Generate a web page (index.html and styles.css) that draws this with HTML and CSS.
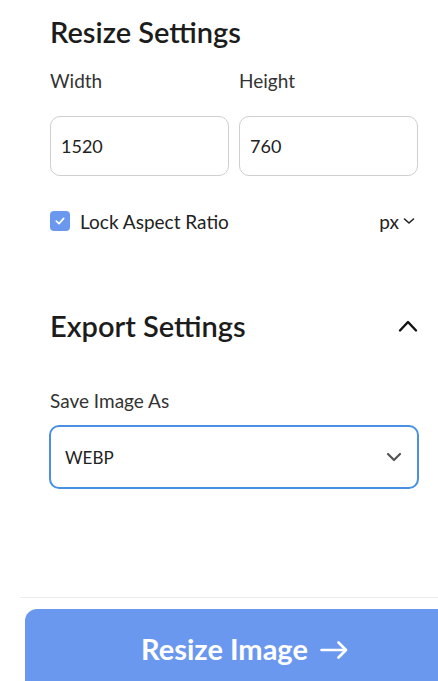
FILE: index.html
```
<!DOCTYPE html>
<html>
<head>
<meta charset="utf-8">
<link rel="stylesheet" href="styles.css">
</head>
<body>
<div class="panel">
  <section class="resize">
    <h2 class="title">Resize Settings</h2>
    <div class="dims">
      <div class="field">
        <label class="label">Width</label>
        <div class="input">1520</div>
      </div>
      <div class="field">
        <label class="label">Height</label>
        <div class="input">760</div>
      </div>
    </div>
    <div class="lockrow">
      <div class="lock">
        <span class="check"><svg width="12" height="12" viewBox="0 0 12 12"><path d="M2.3 6.2 L5 8.7 L9.7 3.4" fill="none" stroke="#fff" stroke-width="1.7" stroke-linecap="round" stroke-linejoin="round"/></svg></span>
        <span class="locktext">Lock Aspect Ratio</span>
      </div>
      <div class="unit">px <svg width="12" height="8" viewBox="0 0 12 8"><path d="M1.5 2 L6 6 L10.5 2" fill="none" stroke="#222" stroke-width="1.6" stroke-linecap="round" stroke-linejoin="round"/></svg></div>
    </div>
  </section>
  <section class="export">
    <div class="exporthead">
      <h2 class="title">Export Settings</h2>
      <svg class="up" width="20" height="14" viewBox="0 0 20 14"><path d="M2 11.5 L10 3 L18 11.5" fill="none" stroke="#111" stroke-width="2.4" stroke-linecap="round" stroke-linejoin="round"/></svg>
    </div>
    <label class="label">Save Image As</label>
    <div class="select">
      <span>WEBP</span>
      <svg width="16" height="10" viewBox="0 0 16 10"><path d="M2 2 L8 8 L14 2" fill="none" stroke="#555" stroke-width="2.2" stroke-linecap="round" stroke-linejoin="round"/></svg>
    </div>
  </section>
</div>
<div class="footer">
  <button class="btn">Resize Image <svg class="arrow" width="28" height="18" viewBox="0 0 28 18"><path d="M1.5 9 H26 M18.5 1.5 L26 9 L18.5 16.5" fill="none" stroke="#fff" stroke-width="2.6" stroke-linecap="round" stroke-linejoin="round"/></svg></button>
</div>
</body>
</html>
```
FILE: styles.css
```
html, body {
  margin: 0;
  padding: 0;
  overflow: hidden;
  background: #fff;
}
body {
  font-family: "Lato", "Liberation Sans", sans-serif;
  color: #222;
  width: 438px;
  height: 681px;
}
.panel {
  padding: 14px 20px 0 50px;
  height: 597px;
  box-sizing: border-box;
}
.title {
  margin: 0;
  font-size: 29px;
  line-height: 36px;
  font-weight: 600;
  color: #1c1c1c;
}
.label {
  display: block;
  font-size: 19px;
  line-height: 24px;
  color: #333;
}
.dims {
  display: grid;
  grid-template-columns: 1fr 1fr;
  column-gap: 10px;
  margin-top: 19px;
}
.input {
  margin-top: 23px;
  height: 60px;
  box-sizing: border-box;
  border: 1px solid #cfcfcf;
  border-radius: 10px;
  padding: 0 10px;
  display: flex;
  align-items: center;
  font-size: 18px;
  color: #222;
}
.lockrow {
  display: flex;
  justify-content: space-between;
  align-items: center;
  margin-top: 34px;
  height: 22px;
}
.lock {
  display: flex;
  align-items: center;
  gap: 10px;
}
.check {
  width: 20px;
  height: 20px;
  border-radius: 4px;
  background: #6b98ef;
  display: flex;
  align-items: center;
  justify-content: center;
}
.locktext {
  font-size: 19px;
  color: #222;
}
.unit {
  font-size: 19px;
  color: #222;
  display: flex;
  align-items: center;
  gap: 4px;
  padding-right: 3px;
}
.export {
  margin-top: 76px;
}
.exporthead {
  display: flex;
  justify-content: space-between;
  align-items: center;
}
.export .label {
  margin-top: 45px;
}
.select {
  margin: 12px -1px 0 -1px;
  height: 64px;
  box-sizing: border-box;
  border: 2px solid #4a90e2;
  border-radius: 10px;
  padding: 0 15px 0 14px;
  display: flex;
  justify-content: space-between;
  align-items: center;
  font-size: 17px;
  color: #222;
}
.footer {
  margin-left: 20px;
  border-top: 1px solid #ececec;
  padding-top: 11px;
  padding-left: 5px;
  overflow: hidden;
  height: 84px;
  box-sizing: border-box;
}
.btn {
  width: 439px;
  height: 90px;
  border: none;
  border-radius: 12px;
  background: #6b98ef;
  color: #fff;
  font-family: "Lato", "Liberation Sans", sans-serif;
  font-size: 29px;
  line-height: 36px;
  font-weight: 700;
  display: flex;
  justify-content: center;
  align-items: flex-start;
  padding: 22px 0 0 0;
  box-sizing: border-box;
}
.arrow {
  margin-left: 12px;
  margin-top: 10px;
}
```
